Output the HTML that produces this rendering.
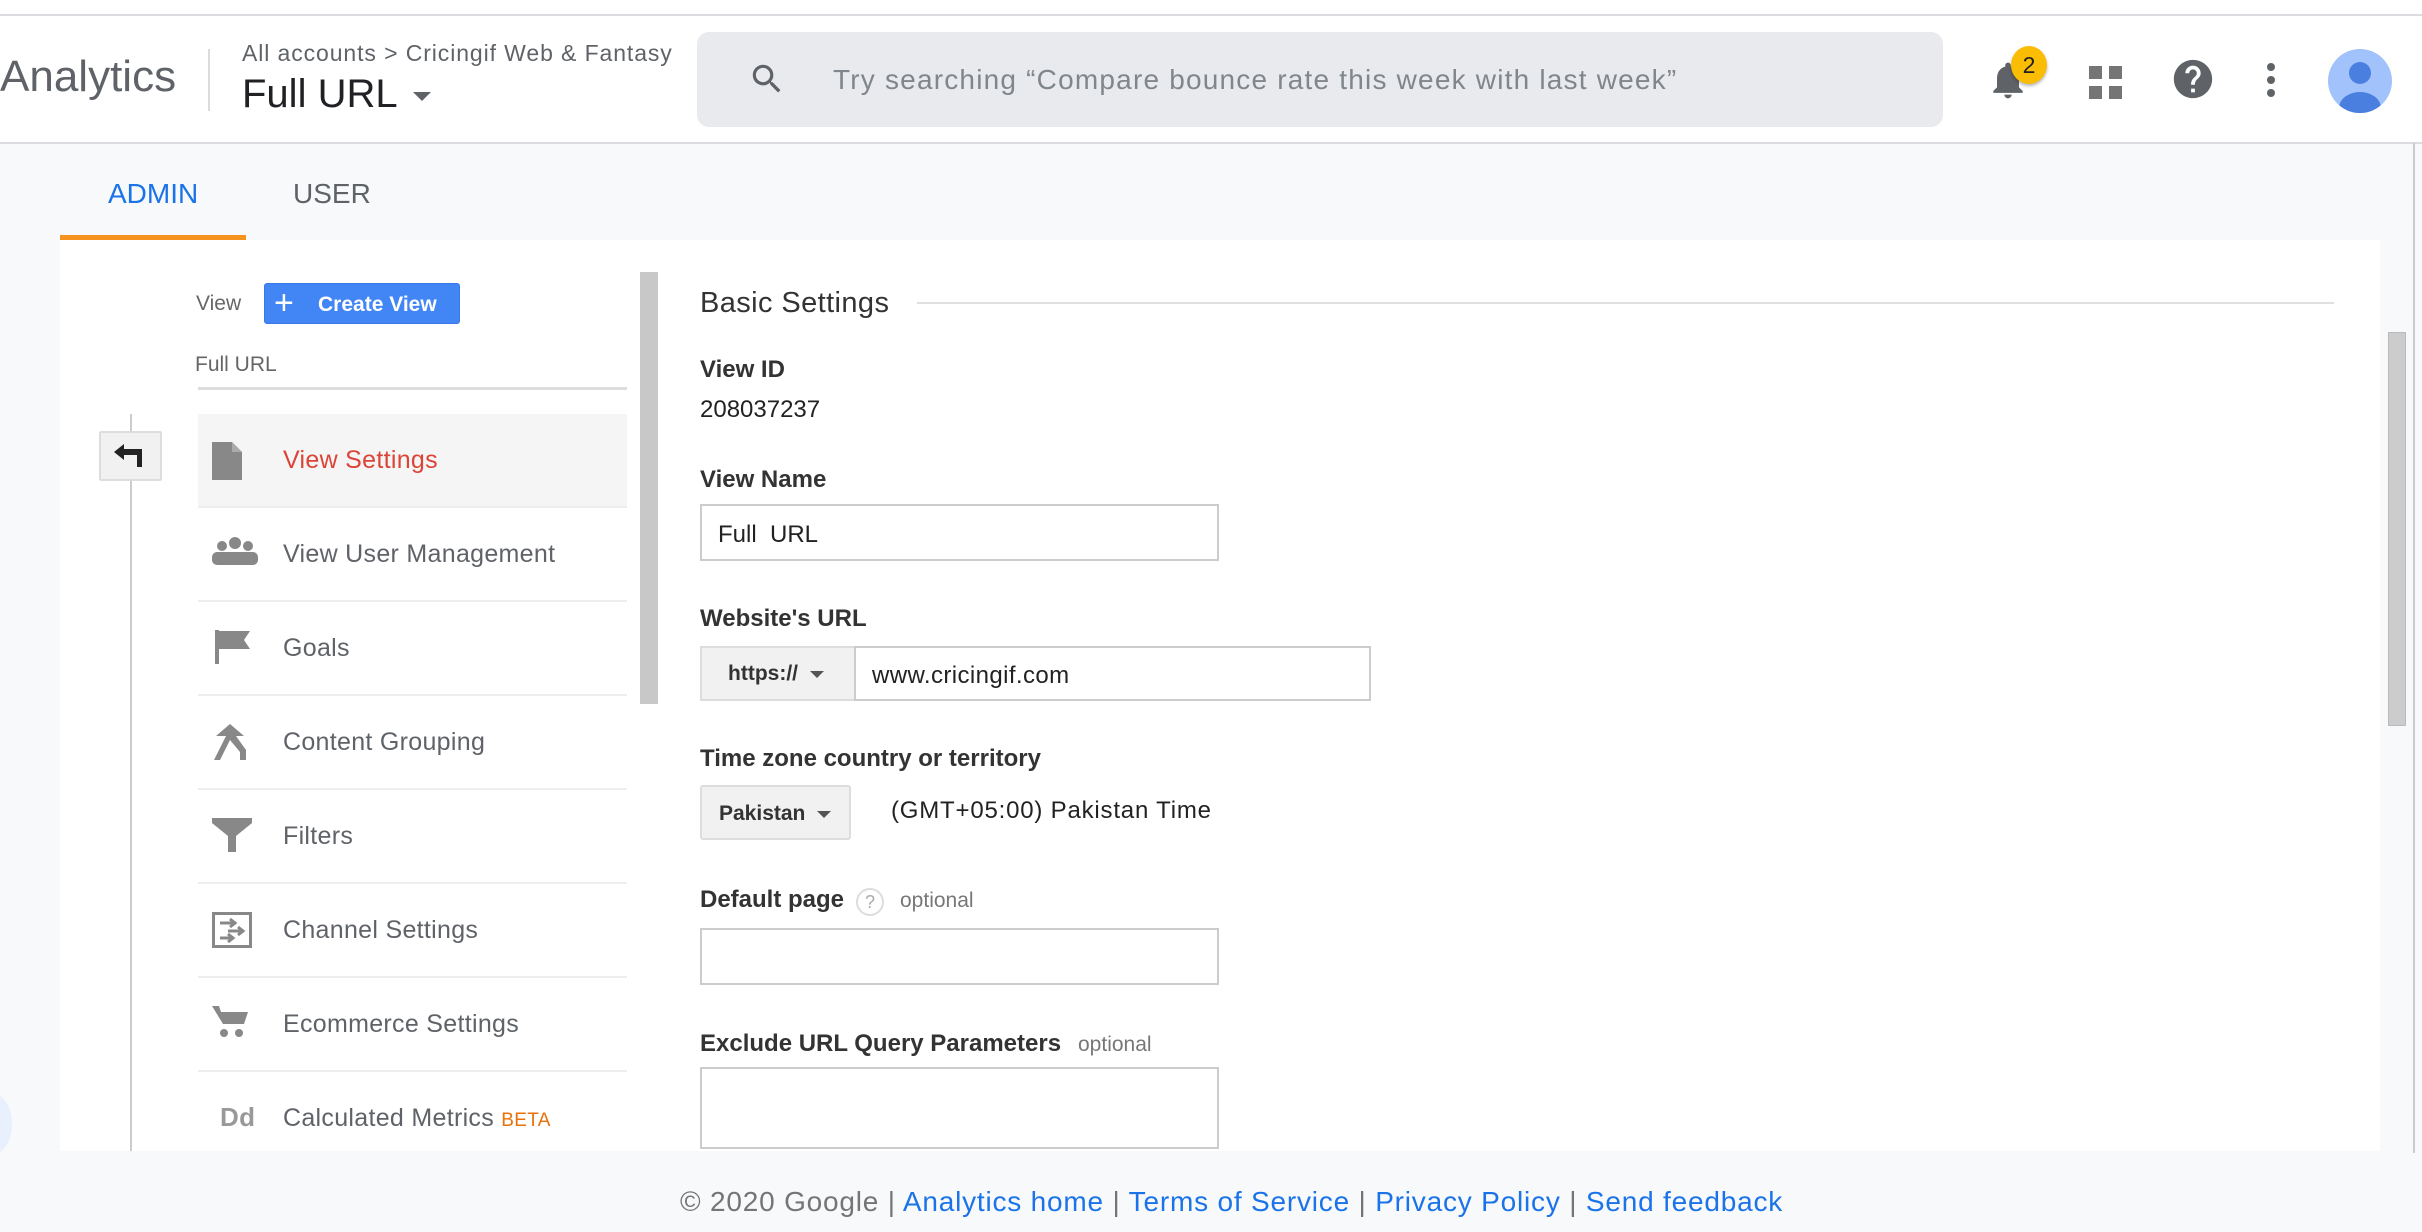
<!DOCTYPE html>
<html><head><meta charset="utf-8"><style>
*{margin:0;padding:0;box-sizing:border-box}
body{width:2422px;height:1232px;overflow:hidden;background:#f8f9fa;font-family:"Liberation Sans",Arial,sans-serif;position:relative;color:#202124}
.a{position:absolute;white-space:nowrap}
.hdr{position:absolute;left:0;top:0;width:2422px;height:144px;background:#fff;border-bottom:2px solid #dadce0}
.topline{position:absolute;left:0;top:14px;width:2422px;height:2px;background:#dadce0}
.panel{position:absolute;left:60px;top:240px;width:2320px;height:911px;background:#fff}
.mi{position:absolute;left:198px;width:429px;height:94px;border-bottom:2px solid #eee}
.mi span{position:absolute;left:85px;top:32px;font-size:25px;color:#5f6368;letter-spacing:0.3px}
.mi svg{position:absolute;left:14px;top:28px}
.lbl{font-size:24px;font-weight:bold;color:#333}
.inp{position:absolute;border:2px solid #ccc;background:#fff}
.btn{position:absolute;background:#f1f1f1;border:2px solid #ddd;border-radius:3px;font-size:21px;font-weight:bold;color:#333}
.car{display:inline-block;width:0;height:0;border-left:7px solid transparent;border-right:7px solid transparent;border-top:7px solid #555;vertical-align:middle}
</style></head><body>
<div class="hdr"></div>
<div class="topline"></div>
<div class="a" style="left:0;top:52px;font-size:44px;color:#5f6368">Analytics</div>
<div class="a" style="left:208px;top:49px;width:2px;height:62px;background:#dadce0"></div>
<div class="a" style="left:242px;top:40px;font-size:23px;color:#5f6368;letter-spacing:0.9px">All accounts &gt; Cricingif Web &amp; Fantasy</div>
<div class="a" style="left:242px;top:72px;font-size:40px;color:#202124">Full URL <span class="car" style="border-width:9px 9px 0 9px;border-top-color:#5f6368;margin-left:6px"></span></div>
<div class="a" style="left:697px;top:32px;width:1246px;height:95px;background:#e8eaed;border-radius:12px"></div>
<svg class="a" style="left:748px;top:60px" width="38" height="38" viewBox="0 0 24 24"><path fill="#5f6368" d="M15.5 14h-.79l-.28-.27A6.47 6.47 0 0 0 16 9.5 6.5 6.5 0 1 0 9.5 16c1.61 0 3.09-.59 4.23-1.57l.27.28v.79l5 4.99L20.49 19l-4.99-5zm-6 0C7.01 14 5 11.99 5 9.5S7.01 5 9.5 5 14 7.01 14 9.5 11.99 14 9.5 14z"/></svg>
<div class="a" style="left:833px;top:64px;font-size:28px;color:#80868b;letter-spacing:1.2px">Try searching “Compare bounce rate this week with last week”</div>
<svg class="a" style="left:1986px;top:58px" width="44" height="44" viewBox="0 0 24 24"><path fill="#5f6368" d="M12 22c1.1 0 2-.9 2-2h-4c0 1.1.9 2 2 2zm6-6v-5c0-3.07-1.64-5.64-4.5-6.32V4c0-.83-.67-1.5-1.5-1.5s-1.5.67-1.5 1.5v.68C7.63 5.36 6 7.92 6 11v5l-2 2v1h16v-1l-2-2z"/></svg>
<div class="a" style="left:2011px;top:46px;width:36px;height:38px;border-radius:50%;background:#fbbc04;box-shadow:0 2px 3px rgba(0,0,0,.3);font-size:23px;text-align:center;line-height:38px;color:#202124">2</div>
<svg class="a" style="left:2089px;top:66px" width="34" height="34" viewBox="0 0 34 34"><g fill="#757575"><rect x="0" y="0" width="13" height="13"/><rect x="20" y="0" width="13" height="13"/><rect x="0" y="20" width="13" height="13"/><rect x="20" y="20" width="13" height="13"/></g></svg>
<svg class="a" style="left:2170px;top:56px" width="46" height="46" viewBox="0 0 24 24"><path fill="#5f6368" d="M12 2C6.48 2 2 6.48 2 12s4.48 10 10 10 10-4.48 10-10S17.52 2 12 2zm1 17h-2v-2h2v2zm2.07-7.75l-.9.92C13.45 12.9 13 13.5 13 15h-2v-.5c0-1.1.45-2.1 1.17-2.83l1.24-1.26c.37-.36.59-.86.59-1.41 0-1.1-.9-2-2-2s-2 .9-2 2H8c0-2.21 1.79-4 4-4s4 1.79 4 4c0 .88-.36 1.68-.93 2.25z"/></svg>
<svg class="a" style="left:2264px;top:62px" width="14" height="36" viewBox="0 0 14 36"><g fill="#5f6368"><circle cx="7" cy="5" r="4"/><circle cx="7" cy="18" r="4"/><circle cx="7" cy="31" r="4"/></g></svg>
<svg class="a" style="left:2327px;top:48px" width="66" height="66" viewBox="0 0 66 66"><defs><clipPath id="c"><circle cx="33" cy="33" r="32"/></clipPath></defs><circle cx="33" cy="33" r="32" fill="#a1c2fa"/><g clip-path="url(#c)" fill="#4a7fe0"><circle cx="33" cy="25" r="11"/><ellipse cx="33" cy="60" rx="21" ry="16"/></g></svg>

<div class="a" style="left:108px;top:178px;font-size:28px;color:#1a73e8">ADMIN</div>
<div class="a" style="left:293px;top:178px;font-size:28px;color:#5f6368">USER</div>
<div class="a" style="left:60px;top:235px;width:186px;height:5px;background:#f6921e"></div>

<div class="panel"></div>
<div class="a" style="left:196px;top:292px;font-size:21px;color:#666">View</div>
<div class="a" style="left:264px;top:283px;width:196px;height:41px;background:#4285f4;border-radius:3px;border:1px solid #3b78e7"></div>
<div class="a" style="left:274px;top:285px;font-size:34px;color:#fff;line-height:36px;font-weight:300">+</div>
<div class="a" style="left:318px;top:293px;font-size:21px;color:#fff;font-weight:bold">Create View</div>
<div class="a" style="left:195px;top:353px;font-size:21px;color:#666">Full URL</div>
<div class="a" style="left:198px;top:387px;width:429px;height:3px;background:#ddd"></div>
<div class="a" style="left:130px;top:414px;width:2px;height:737px;background:#ccc"></div>
<div class="a" style="left:99px;top:431px;width:63px;height:50px;background:#f1f1f1;border:2px solid #ddd;border-radius:2px"></div>
<svg class="a" style="left:112px;top:443px" width="34" height="26" viewBox="0 0 34 26"><path d="M2 9 L12 1 L12 6 L30 6 L30 24 L25 24 L25 12 L12 12 L12 17 Z" fill="#222"/></svg>
<div class="a" style="left:640px;top:272px;width:18px;height:432px;background:#c8c8c8"></div>

<div class="mi" style="top:414px;background:#f5f5f5"><svg width="30" height="38" viewBox="0 0 30 38"><path d="M0 0H20L30 10V38H0Z" fill="#888"/><path d="M20 0V10H30" fill="#aaa"/></svg><span style="color:#db4437">View Settings</span></div>
<div class="mi" style="top:508px"><svg width="46" height="30" viewBox="0 0 46 30"><g fill="#888"><circle cx="10" cy="10" r="5"/><circle cx="23" cy="7" r="6"/><circle cx="36" cy="10" r="5"/><rect x="0" y="16" width="46" height="13" rx="5"/></g></svg><span>View User Management</span></div>
<div class="mi" style="top:602px"><svg width="40" height="34" viewBox="0 0 40 34"><path d="M3 0H7V34H3ZM7 1H38L32 10L38 19H7Z" fill="#888"/></svg><span>Goals</span></div>
<div class="mi" style="top:696px"><svg width="36" height="36" viewBox="0 0 36 36"><path d="M18 0L32 12H24L34 26V36H28V28L18 16L8 36H2L14 12H4Z" fill="#888"/></svg><span>Content Grouping</span></div>
<div class="mi" style="top:790px"><svg width="40" height="34" viewBox="0 0 40 34"><path d="M0 0H40V5L24 18V34H16V18L0 5Z" fill="#888"/></svg><span>Filters</span></div>
<div class="mi" style="top:884px"><svg width="40" height="36" viewBox="0 0 40 36"><rect x="1.5" y="1.5" width="37" height="33" fill="none" stroke="#888" stroke-width="3"/><path d="M8 11H24M18 7l5 4-5 4M16 19H32M26 15l5 4-5 4M8 26H22M16 22l5 4-5 4" stroke="#888" stroke-width="3" fill="none"/></svg><span>Channel Settings</span></div>
<div class="mi" style="top:978px"><svg width="36" height="32" viewBox="0 0 36 32"><path d="M0 0H7L9 6H36L32 18H11Z" fill="#888"/><circle cx="12" cy="27" r="4" fill="#888"/><circle cx="27" cy="27" r="4" fill="#888"/></svg><span>Ecommerce Settings</span></div>
<div class="mi" style="top:1072px;border:none"><span style="left:22px;top:30px;font-weight:bold;color:#999;font-size:26px">Dd</span><span>Calculated Metrics <span style="position:static;color:#e8710a;font-size:19px">BETA</span></span></div>

<div class="a" style="left:700px;top:287px;font-size:29px;color:#333;letter-spacing:0.4px">Basic Settings</div>
<div class="a" style="left:917px;top:302px;width:1417px;height:2px;background:#e0e0e0"></div>
<div class="a lbl" style="left:700px;top:356px">View ID</div>
<div class="a" style="left:700px;top:396px;font-size:24px;color:#222">208037237</div>
<div class="a lbl" style="left:700px;top:466px">View Name</div>
<div class="inp" style="left:700px;top:504px;width:519px;height:57px"></div>
<div class="a" style="left:718px;top:521px;font-size:24px;color:#222">Full&nbsp; URL</div>
<div class="a lbl" style="left:700px;top:605px">Website's URL</div>
<div class="btn" style="left:700px;top:646px;width:156px;height:55px;border-radius:0;border-right:none"><span style="position:absolute;left:26px;top:14px">https:// &nbsp;<span class="car"></span></span></div>
<div class="inp" style="left:854px;top:646px;width:517px;height:55px"></div>
<div class="a" style="left:872px;top:662px;font-size:24px;color:#222;letter-spacing:0.4px">www.cricingif.com</div>
<div class="a lbl" style="left:700px;top:745px">Time zone country or territory</div>
<div class="btn" style="left:700px;top:785px;width:151px;height:55px"><span style="position:absolute;left:17px;top:15px">Pakistan &nbsp;<span class="car"></span></span></div>
<div class="a" style="left:891px;top:797px;font-size:24px;color:#222;letter-spacing:0.8px">(GMT+05:00) Pakistan Time</div>
<div class="a lbl" style="left:700px;top:886px">Default page</div>
<div class="a" style="left:856px;top:888px;width:28px;height:28px;border-radius:50%;border:2px solid #ddd;color:#aaa;font-size:18px;text-align:center;line-height:24px">?</div>
<div class="a" style="left:900px;top:889px;font-size:21px;color:#777">optional</div>
<div class="inp" style="left:700px;top:928px;width:519px;height:57px"></div>
<div class="a lbl" style="left:700px;top:1030px">Exclude URL Query Parameters</div>
<div class="a" style="left:1078px;top:1033px;font-size:21px;color:#777">optional</div>
<div class="inp" style="left:700px;top:1067px;width:519px;height:82px"></div>
<div class="a" style="left:2388px;top:332px;width:18px;height:394px;background:#ccc;border:1px solid #bbb"></div>
<div class="a" style="left:2413px;top:143px;width:2px;height:1010px;background:#ccc"></div>
<div class="a" style="left:-26px;top:1094px;width:38px;height:60px;border-radius:50%;background:#e8f0fe"></div>

<div class="a" style="left:680px;top:1186px;font-size:28px;color:#757575;letter-spacing:0.8px">© 2020 Google | <span style="color:#1a73e8">Analytics home</span> | <span style="color:#1a73e8">Terms of Service</span> | <span style="color:#1a73e8">Privacy Policy</span> | <span style="color:#1a73e8">Send feedback</span></div>
</body></html>
